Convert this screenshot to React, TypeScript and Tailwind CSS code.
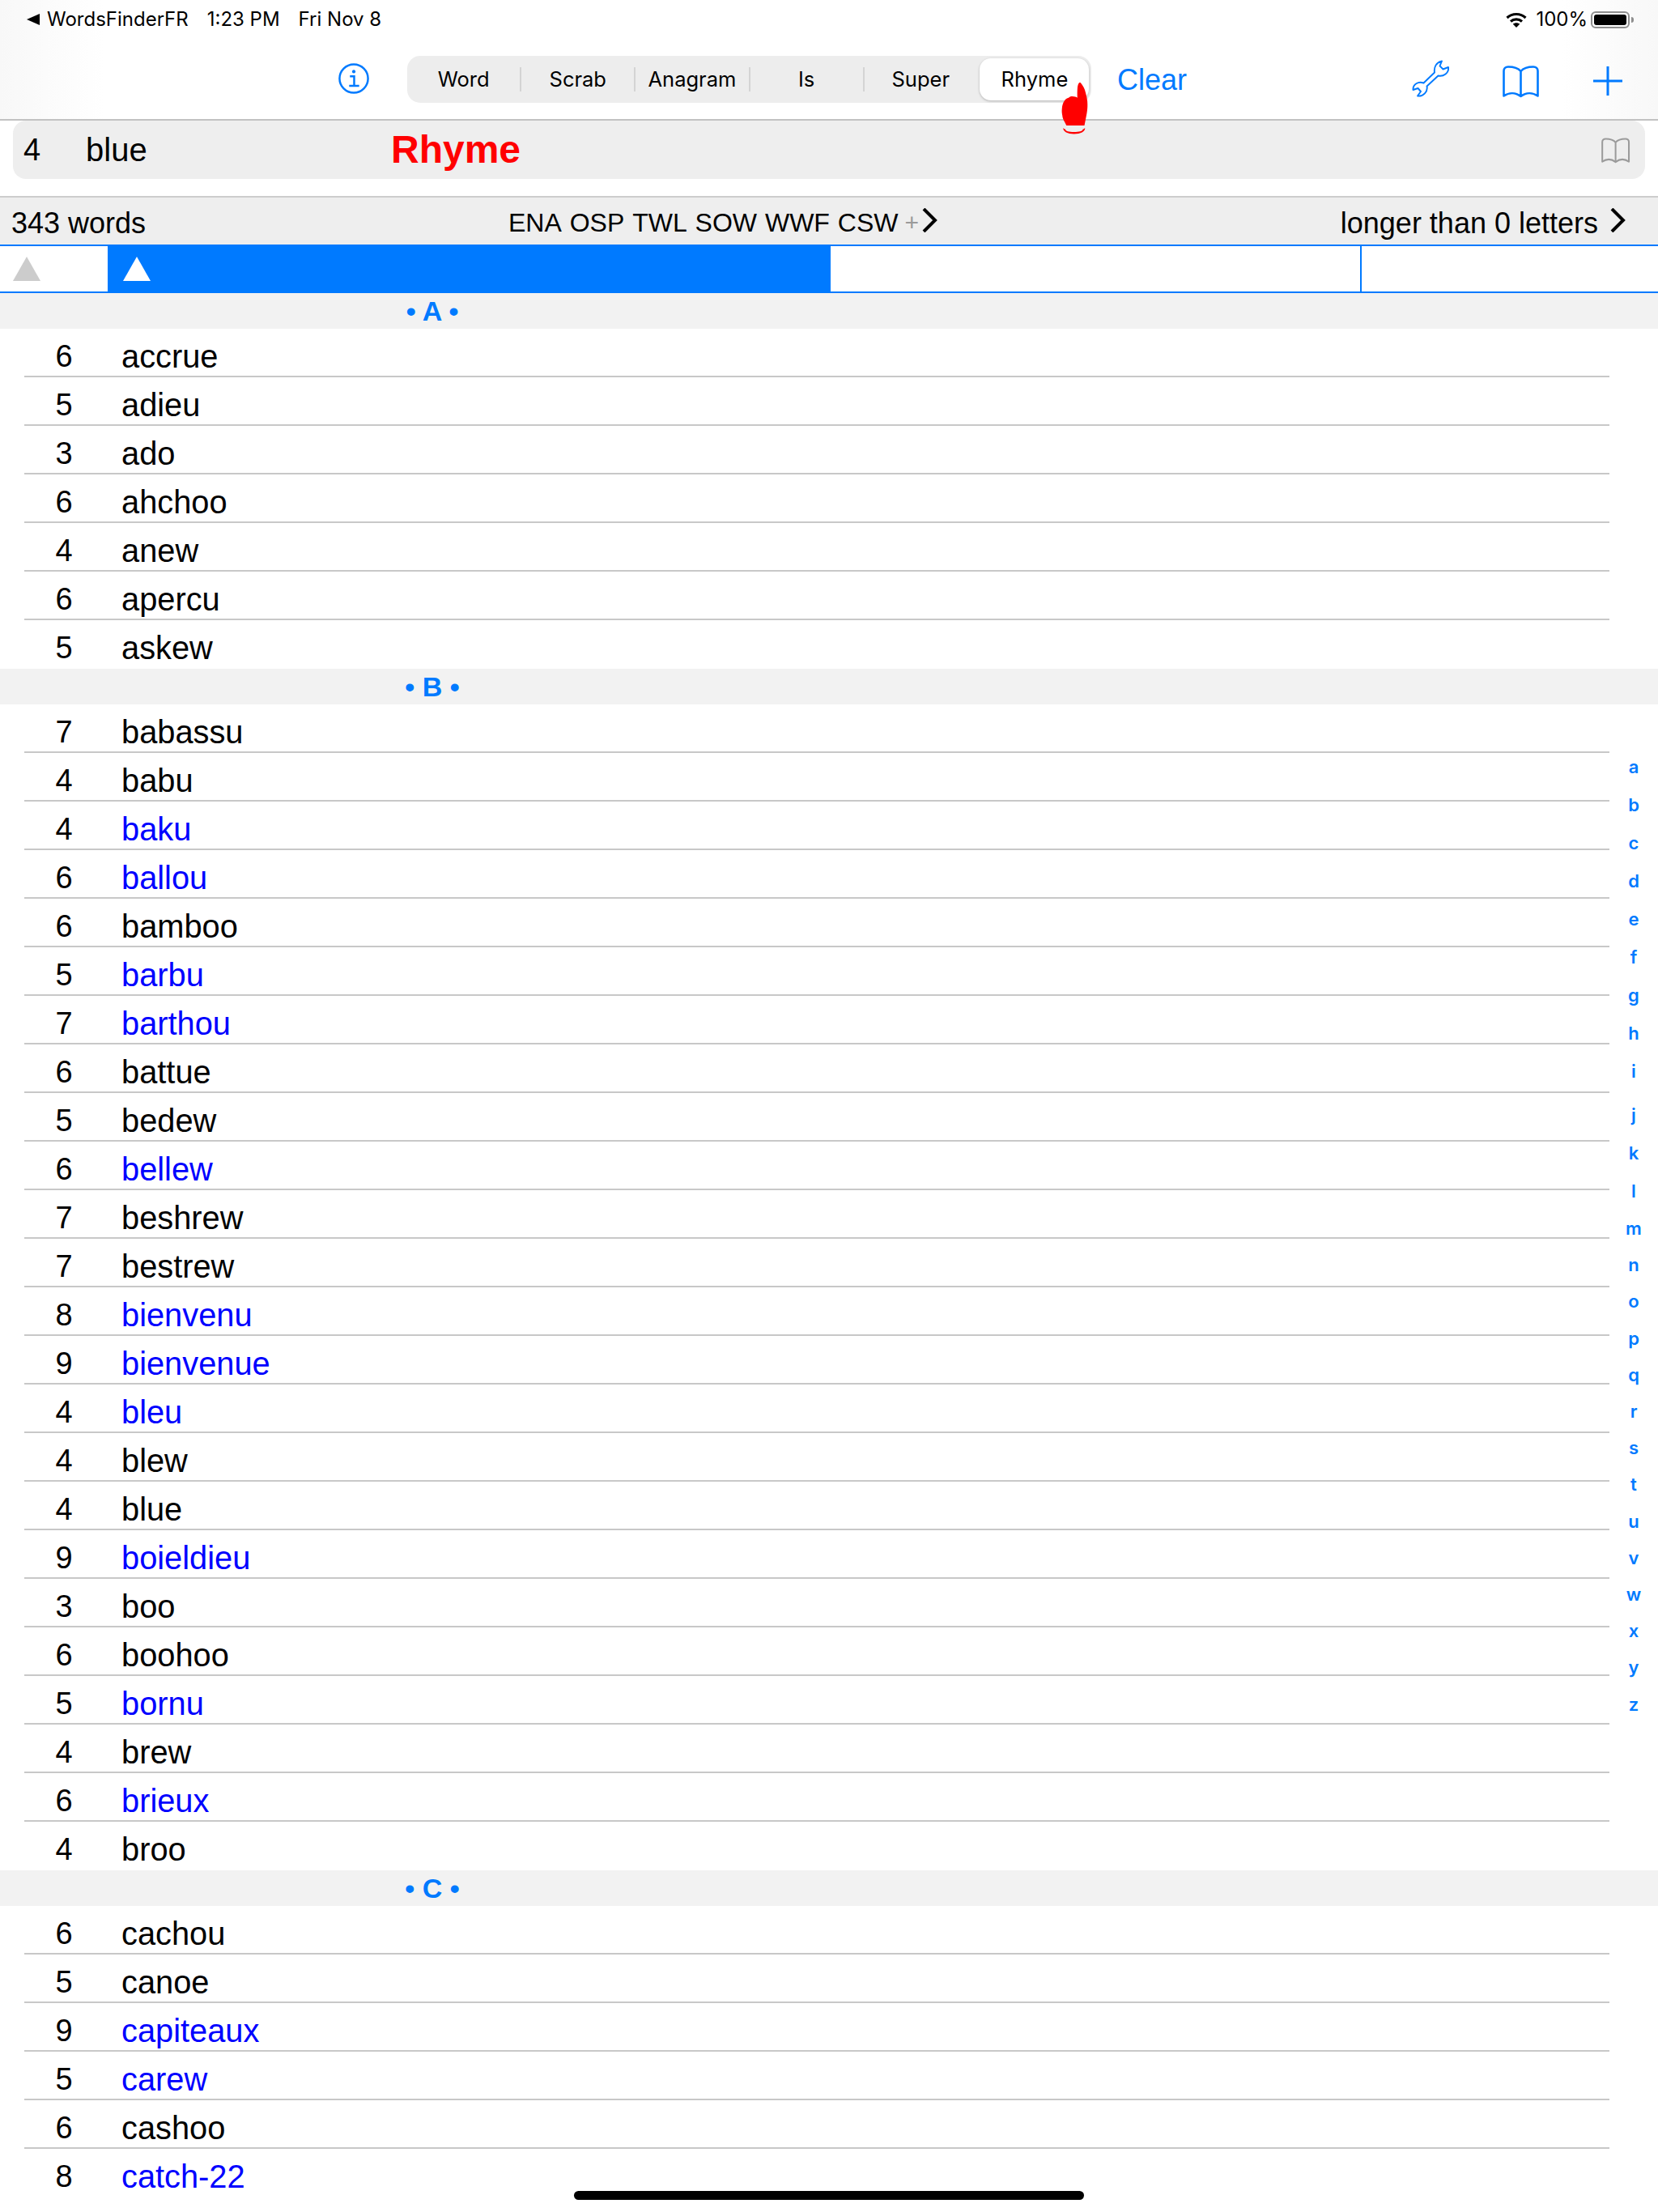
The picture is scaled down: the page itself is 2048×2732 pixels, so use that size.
import React from "react";

type Row = [number, string, boolean?];

const sectionA: Row[] = [
  [6, "accrue"], [5, "adieu"], [3, "ado"], [6, "ahchoo"], [4, "anew"], [6, "apercu"], [5, "askew"],
];
const sectionB: Row[] = [
  [7, "babassu"], [4, "babu"], [4, "baku", true], [6, "ballou", true], [6, "bamboo"], [5, "barbu", true],
  [7, "barthou", true], [6, "battue"], [5, "bedew"], [6, "bellew", true], [7, "beshrew"], [7, "bestrew"],
  [8, "bienvenu", true], [9, "bienvenue", true], [4, "bleu", true], [4, "blew"], [4, "blue"],
  [9, "boieldieu", true], [3, "boo"], [6, "boohoo"], [5, "bornu", true], [4, "brew"], [6, "brieux", true], [4, "broo"],
];
const sectionC: Row[] = [
  [6, "cachou"], [5, "canoe"], [9, "capiteaux", true], [5, "carew", true], [6, "cashoo"], [8, "catch-22", true],
];

const tabs = ["Word", "Scrab", "Anagram", "Is", "Super", "Rhyme"];
const letters = "abcdefghijklmnopqrstuvwxyz".split("");

const sf = "font-['Inter','Noto_Sans',sans-serif]";

const Book = ({ className }: { className: string }) => (
  <svg viewBox="0 0 46 40" fill="none" stroke="currentColor" strokeWidth="2.6" strokeLinejoin="round" strokeLinecap="round" className={className}>
    <path d="M22.5 7C19 3 13 1.5 7 1.5 3.500 1.500 1.500 3.500 1.500 6.500V37.500C8 33 16 33 22.500 38 29 33 37 33 43.500 37.500V6.500C43.500 3.500 41.500 1.500 38 1.500 32 1.500 26 3 22.500 7V38" />
  </svg>
);

const Chevron = ({ className }: { className: string }) => (
  <svg viewBox="0 0 20 30" fill="none" stroke="currentColor" strokeWidth="4" className={className}>
    <path d="M3 1L17 15L3 29" />
  </svg>
);

const Triangle = ({ className }: { className: string }) => (
  <svg viewBox="0 0 34 30" fill="currentColor" className={className}>
    <path d="M17 0L34 30H0Z" />
  </svg>
);

const Section = ({ letter, rows }: { letter: string; rows: Row[] }) => (
  <div>
    <div className="flex h-[44px] w-full items-center bg-[#f2f2f2]">
      <div className="w-[1068px] text-center text-[34px] leading-[44px] font-bold text-[#007aff]">• {letter} •</div>
    </div>
    <div>
      {rows.map(([count, word, french]) => (
        <div key={word} className="ml-[30px] flex h-[60px] w-[1958px] items-end border-b-2 border-[#c8c8c8] last:border-transparent">
          <span className="w-[98px] text-center text-[38px] leading-[48px] text-black">{count}</span>
          <span className={`ml-[22px] text-[39.8px] leading-[48px] ${french ? "text-[#0000ff]" : "text-black"}`}>{word}</span>
        </div>
      ))}
    </div>
  </div>
);

export default function App() {
  return (
    <div className="relative h-[2732px] w-[2048px] overflow-hidden bg-white font-['Liberation_Sans',Arial,sans-serif] text-black">
      <header className="h-[149px] border-b-2 border-[#c2c2c2] bg-[linear-gradient(90deg,#f8f8f8_0px,#ffffff_130px,#ffffff_1930px,#f8f8f8_2048px)]">
        <div className={`flex h-[48px] items-center pl-[33px] pr-[30px] text-[24px] ${sf}`}>
          <svg viewBox="0 0 16 14" className="h-[14px] w-[16px]"><path d="M16 0V14L0 7Z" /></svg>
          <span className="ml-[9px]">WordsFinderFR</span>
          <span className="ml-[23px]">1:23 PM</span>
          <span className="ml-[23px]">Fri Nov 8</span>
          <svg viewBox="0 0 26 19" className="ml-auto h-[19px] w-[26px]" fill="none" stroke="black" strokeWidth="3.2">
            <path d="M1.500 7C8 1 18 1 24.500 7" />
            <path d="M6 11.500C10 8 16 8 20 11.500" />
            <path d="M13 19L8.800 14.800C11 12.800 15 12.800 17.200 14.800Z" fill="black" stroke="none" />
          </svg>
          <span className="ml-[11px]">100%</span>
          <div className="ml-[4px] flex h-[21px] w-[48px] items-center rounded-[6px] border-2 border-[#8e8e8e] p-[2px]">
            <div className="h-full w-full rounded-[3px] bg-black" />
          </div>
          <div className="ml-[2px] h-[7px] w-[3px] rounded-r-full bg-[#8e8e8e]" />
        </div>
        <div className="flex h-[100px] items-start pl-[418px] pt-[21px]">
          <svg viewBox="0 0 40 40" fill="none" stroke="#007aff" strokeWidth="2.6" className="mt-[9px] h-[38px] w-[38px] shrink-0">
            <circle cx="20" cy="20" r="18.500" />
            <circle cx="20" cy="11" r="2.200" fill="#007aff" stroke="none" />
            <path d="M15 17H20.500V29M14 29.500H27" />
          </svg>
          <div className={`relative ml-[47px] flex h-[58px] w-[845px] items-center rounded-[16px] bg-[#ededed] pr-[2px] text-[25.5px] ${sf}`}>
            {tabs.map((t, i) => (
              <div
                key={t}
                className={`flex h-[30px] flex-1 items-center justify-center ${i < 4 ? "border-r-2 border-[#d4d4d4]" : ""}`}
              >
                {t === "Rhyme" ? (
                  <div className="ml-[3px] flex h-[52px] w-[135px] shrink-0 items-center justify-center rounded-[14px] bg-white shadow-[0_1px_3px_rgba(0,0,0,0.25)]">{t}</div>
                ) : (
                  t
                )}
              </div>
            ))}
          </div>
          <span className="ml-[32px] text-[36px] leading-[60px] text-[#007aff]">Clear</span>
          <svg viewBox="0 0 52 52" fill="none" stroke="#007aff" strokeWidth="1.900" strokeLinejoin="round" className="ml-[275px] mt-[2px] h-[52px] w-[52px] shrink-0">
            <path d="M31 18.500C30 12 33 6 40 4.500L37.500 10.500L41.500 14.500L48 12C49 19 42 24 35.500 22.500L21.500 35.500C23 42 17 48.500 10 47.500L14 42L10.500 38L4.500 40C4 33 11 29 17.500 31.500Z" />
          </svg>
          <Book className="ml-[63px] mt-[12px] h-[40px] w-[46px] shrink-0 text-[#007aff]" />
          <svg viewBox="0 0 36 36" stroke="#007aff" strokeWidth="3" className="ml-[66px] mt-[13px] h-[36px] w-[36px] shrink-0">
            <path d="M18 0V36M0 18H36" />
          </svg>
        </div>
      </header>

      <div className="mx-[16px] flex h-[72px] items-center rounded-[16px] bg-[#eeeeee] pl-[13px] pr-[18px] text-[40px]">
        <span className="w-[77px] text-[38px]">4</span>
        <span className="w-[377px]">blue</span>
        <span className="text-[48px] font-bold text-[#ff0000]">Rhyme</span>
        <Book className="ml-auto mt-[2px] h-[32px] w-[36px] text-[#9b9b9b]" />
      </div>

      <div className="mt-[21px] flex h-[60px] items-center border-t-2 border-[#cdcdcd] bg-[#eeeeee] pl-[14px] pr-[40px] pt-[6px] text-[36px]">
        <span className="w-[614px]">343 words</span>
        <span className="mt-[-3px] text-[32px] [font-kerning:none] [word-spacing:1px]">ENA OSP TWL SOW WWF CSW</span>
        <span className="ml-[8px] mt-[-4px] text-[30px] text-[#9a9a9a]">+</span>
        <Chevron className="ml-[3px] mt-[-8px] h-[30px] w-[20px]" />
        <span className="ml-auto">longer than 0 letters</span>
        <Chevron className="ml-[14px] mt-[-8px] h-[30px] w-[20px]" />
      </div>

      <div className="flex h-[60px] border-y-2 border-[#007aff]">
        <div className="flex w-[133px] items-center pl-[16px]">
          <Triangle className="h-[30px] w-[34px] text-[#cccccc]" />
        </div>
        <div className="flex w-[893px] items-center bg-[#007aff] pl-[19px]">
          <Triangle className="h-[30px] w-[34px] text-white" />
        </div>
        <div className="w-[656px] border-r-2 border-[#007aff]" />
      </div>

      <Section letter="A" rows={sectionA} />
      <Section letter="B" rows={sectionB} />
      <Section letter="C" rows={sectionC} />

      {/* red pointing hand over the Rhyme tab */}
      <svg viewBox="0 0 35 66" fill="#ff0000" className="absolute left-[1310px] top-[100px] h-[66px] w-[35px]">
        <path d="M24 1.700C26 3 28.500 7 30 11C32 18 33.500 24 33.300 29C33.500 36 32 43 29.500 55H7.300C5 50 2.500 47 2.300 43C1.500 39 1.500 37 1.700 35C2 30 3 27 4.500 25C6 22 8 21 10 20.700C11.500 19 14 18.500 16 19.300C18 19 20 20 20.800 20.700C20.500 15 20.800 8 21.300 6C21.800 4 22.500 2 24 1.700Z" />
        <path d="M3.300 58C2.800 62.500 9 65.500 16.700 65.500C24.500 65.500 30.800 62.500 30.200 58C29 59 28.500 59.500 27.500 59.800C27.500 62 23 63 16.700 63C10 63 6.200 62 6 59.800C5 59.500 4.300 59 3.300 58Z" />
      </svg>

      {/* alphabet index */}
      <div className={`absolute right-[10px] top-[924px] flex w-[40px] flex-col items-center text-[22px] font-semibold text-[#007aff] ${sf}`}>
        {letters.map((l, i) => (
          <span key={l} className={`flex items-center ${i < 12 ? "h-[47px]" : "h-[45.200px]"} ${l === "i" ? "mb-[7px]" : ""}`}>{l}</span>
        ))}
      </div>

      <div className="absolute left-[709px] top-[2706px] h-[11px] w-[630px] rounded-full bg-black" />
    </div>
  );
}
